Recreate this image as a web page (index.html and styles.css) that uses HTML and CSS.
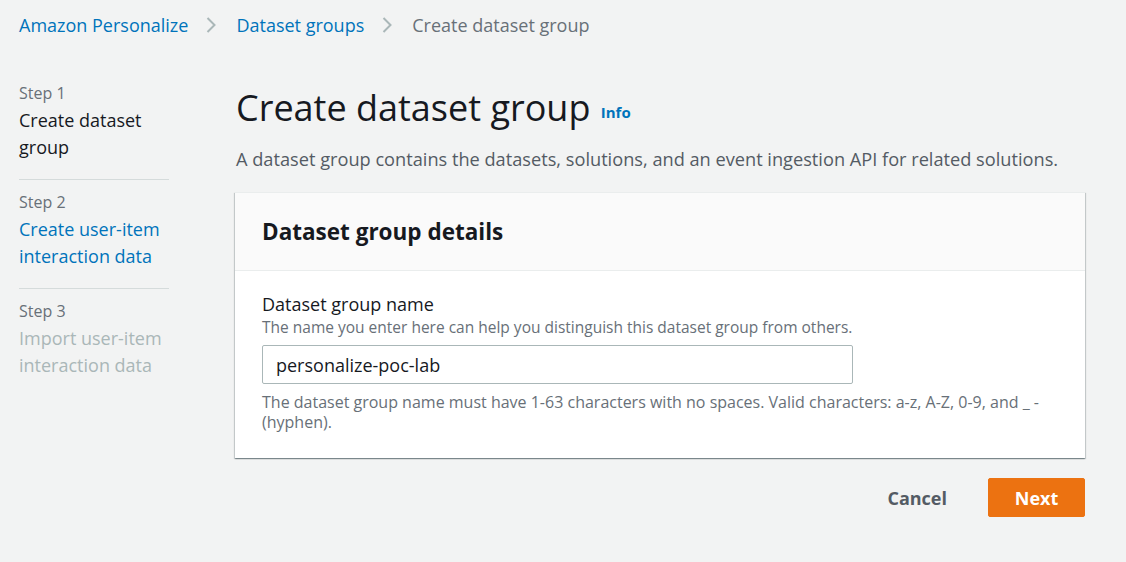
FILE: index.html
```html
<!DOCTYPE html>
<html>
<head>
<meta charset="utf-8">
<link rel="stylesheet" href="styles.css">
</head>
<body>
<nav class="crumbs">
  <a class="crumb-link">Amazon Personalize</a>
  <svg class="chev" width="10" height="20" viewBox="0 0 10 20"><path d="M1.5 3 L8.5 10 L1.5 17" fill="none" stroke="#aab7b8" stroke-width="2"/></svg>
  <a class="crumb-link">Dataset groups</a>
  <svg class="chev" width="10" height="20" viewBox="0 0 10 20"><path d="M1.5 3 L8.5 10 L1.5 17" fill="none" stroke="#aab7b8" stroke-width="2"/></svg>
  <span class="crumb-current">Create dataset group</span>
</nav>
<div class="layout">
  <aside class="steps">
    <div class="step">
      <div class="step-num">Step 1</div>
      <div class="step-title current">Create dataset group</div>
    </div>
    <div class="step">
      <div class="step-num">Step 2</div>
      <div class="step-title link">Create user-item interaction data</div>
    </div>
    <div class="step">
      <div class="step-num">Step 3</div>
      <div class="step-title disabled">Import user-item interaction data</div>
    </div>
  </aside>
  <main class="main">
    <h1 class="title">Create dataset group <span class="info">Info</span></h1>
    <p class="desc">A dataset group contains the datasets, solutions, and an event ingestion API for related solutions.</p>
    <section class="card">
      <div class="card-head">Dataset group details</div>
      <div class="card-body">
        <div class="label">Dataset group name</div>
        <div class="hint">The name you enter here can help you distinguish this dataset group from others.</div>
        <div class="input">personalize-poc-lab</div>
        <div class="constraint">The dataset group name must have 1-63 characters with no spaces. Valid characters: a-z, A-Z, 0-9, and _ - (hyphen).</div>
      </div>
    </section>
    <div class="actions">
      <button class="btn-cancel">Cancel</button>
      <button class="btn-next">Next</button>
    </div>
  </main>
</div>
</body>
</html>
```
FILE: styles.css
```css
* { box-sizing: border-box; }
html, body { margin: 0; padding: 0; }
body {
  background: #f2f3f3;
  font-family: "Open Sans", "Noto Sans", sans-serif;
  color: #16191f;
  width: 1126px;
  height: 562px;
  overflow: hidden;
}
.crumbs {
  display: flex;
  align-items: center;
  height: 50px;
  padding-left: 19px;
  font-size: 18px;
}
.crumb-link { color: #0073bb; }
.crumb-current { color: #687078; }
.chev { margin: 0 20px 0 18px; }
.layout {
  display: flex;
  padding-left: 19px;
  padding-top: 32px;
}
.steps {
  width: 150px;
  flex-shrink: 0;
}
.step {
  padding-bottom: 18px;
  border-bottom: 1px solid #d5dbdb;
  margin-bottom: 11px;
}
.step:last-child { border-bottom: none; }
.step-num {
  font-size: 16px;
  color: #687078;
  line-height: 22px;
}
.step-title {
  margin-top: 3px;
  font-size: 18px;
  line-height: 27px;
}
.step-title.current { color: #16191f; }
.step-title.link { color: #0073bb; }
.step-title.disabled { color: #aab7b8; }
.main {
  margin-left: 66px;
  width: 850px;
}
.title {
  margin: 4px 0 0;
  padding-left: 1px;
  font-size: 36px;
  font-weight: 400;
  line-height: 44px;
}
.info {
  font-size: 15px;
  font-weight: 700;
  color: #0073bb;
  vertical-align: 3px;
  margin-left: 1px;
}
.desc {
  margin: 12px 0 0;
  padding-left: 1px;
  font-size: 18.2px;
  line-height: 26px;
  color: #545b64;
}
.card {
  margin-top: 20px;
  background: #fff;
  box-shadow: 0 1px 1px 0 rgba(0,28,36,0.3), 1px 1px 1px 0 rgba(0,28,36,0.15), -1px 1px 1px 0 rgba(0,28,36,0.15);
  border-top: 1px solid #eaeded;
}
.card-head {
  background: #fafafa;
  border-bottom: 1px solid #eaeded;
  height: 78px;
  padding: 0 27px;
  display: flex;
  align-items: center;
  font-size: 22.5px;
  font-weight: 700;
}
.card-body {
  padding: 22px 27px 26px;
}
.label {
  font-size: 18px;
  line-height: 22px;
}
.hint {
  margin-top: 2px;
  font-size: 15.5px;
  line-height: 20px;
  color: #687078;
}
.input {
  margin-top: 8px;
  width: 591px;
  height: 39px;
  border: 1px solid #aab7b8;
  border-radius: 2px;
  padding: 0 13px;
  display: flex;
  align-items: center;
  font-size: 18px;
}
.constraint {
  margin-top: 8px;
  font-size: 16px;
  line-height: 20px;
  color: #687078;
}
.actions {
  display: flex;
  justify-content: flex-end;
  align-items: center;
  margin-top: 20px;
  gap: 21px;
}
.btn-cancel {
  background: none;
  border: none;
  font-family: inherit;
  font-size: 18px;
  font-weight: 700;
  color: #545b64;
  padding: 0 20px;
  height: 39px;
}
.btn-next {
  background: #ec7211;
  border: 1px solid #ec7211;
  border-radius: 2px;
  color: #fff;
  font-family: inherit;
  font-size: 18px;
  font-weight: 700;
  width: 97px;
  height: 39px;
}
```
